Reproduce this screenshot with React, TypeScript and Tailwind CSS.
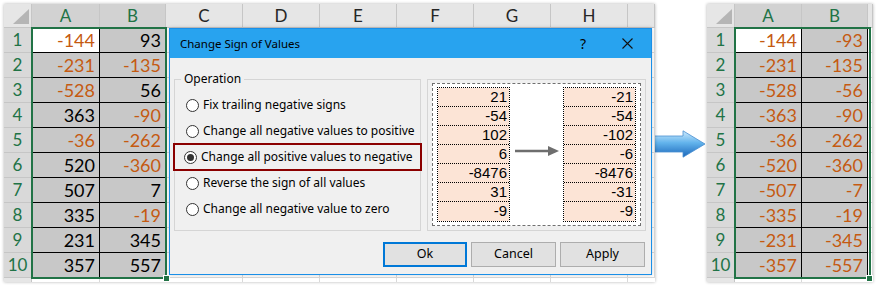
const LEFT: [number, number][] = [
  [-144, 93],
  [-231, -135],
  [-528, 56],
  [363, -90],
  [-36, -262],
  [520, -360],
  [507, 7],
  [335, -19],
  [231, 345],
  [357, 557],
];
const RIGHT = LEFT.map(([a, b]) => [-Math.abs(a), -Math.abs(b)] as [number, number]);

const PREV_L = ['21', '-54', '102', '6', '-8476', '31', '-9'];
const PREV_R = ['-21', '-54', '-102', '-6', '-8476', '-31', '-9'];

const OPTIONS = [
  'Fix trailing negative signs',
  'Change all negative values to positive',
  'Change all positive values to negative',
  'Reverse the sign of all values',
  'Change all negative value to zero',
];

function Corner() {
  return (
    <div className="w-[28px] h-[24px] shrink-0 bg-[#e6e6e6] border-r border-b border-[#c6c6c6] flex items-end justify-end pr-[2px] pb-[3px]">
      <svg width="16" height="15" viewBox="0 0 16 15">
        <polygon points="16,0 16,15 0,15" fill="#b5b5b5" />
      </svg>
    </div>
  );
}

function ColHead({ label, w, sel }: { label: string; w: string; sel?: boolean }) {
  return (
    <div
      className={`${w} h-[24px] shrink-0 border-r border-b border-[#c6c6c6] flex items-center justify-center text-[17px] ${
        sel ? 'bg-[#d2d2d2] text-[#217346]' : 'bg-[#e6e6e6] text-[#262626]'
      }`}
    >
      {label}
    </div>
  );
}

function RowHead({ n }: { n: number | string }) {
  return (
    <div className="w-[28px] h-[25px] shrink-0 bg-[#d9d9d9] border-r border-b border-[#c6c6c6] flex items-center justify-center text-[17px] text-[#217346]">
      {n}
    </div>
  );
}

function Num({ v, w, white }: { v: number; w: string; white?: boolean }) {
  return (
    <div
      className={`${w} h-[25px] shrink-0 border-r border-b border-black flex items-center justify-end pr-[4px] text-[18px] ${
        v < 0 ? 'text-[#c55a11]' : 'text-black'
      } ${white ? 'bg-white' : 'bg-[#c8c8c8]'}`}
    >
      {v}
    </div>
  );
}

function Blank({ w }: { w: string }) {
  return <div className={`${w} h-[25px] shrink-0 border-r border-b border-[#d9d9d9] bg-white`} />;
}

function Radio({ on }: { on?: boolean }) {
  return (
    <span className="w-[13px] h-[13px] shrink-0 rounded-full border border-[#333] bg-white flex items-center justify-center">
      {on && <span className="w-[7px] h-[7px] rounded-full bg-[#333]" />}
    </span>
  );
}

function PrevCol({ items }: { items: string[] }) {
  return (
    <div className="w-[73px] flex flex-col border border-dotted border-black">
      {items.map((t, i) => (
        <div
          key={i}
          className={`h-[19px] bg-[#fce4d6] flex items-center justify-end pr-[2px] text-[15px] text-black font-['Liberation_Sans',sans-serif] ${
            i < items.length - 1 ? 'border-b border-dotted border-black' : ''
          }`}
        >
          {t}
        </div>
      ))}
    </div>
  );
}

function Dialog() {
  return (
    <div className="absolute left-[165px] top-[24px] w-[483px] h-[247px] border border-[#1a8fe8] bg-[#f0f0f0] flex flex-col font-['Noto_Sans',sans-serif] text-[12px] text-black shadow-[0_0_4px_rgba(0,0,0,0.2)]">
      {/* title bar */}
      <div className="h-[29px] bg-[#28a3ef] flex items-center pl-[10px] pr-[18px] text-[11.5px]">
        <span className="flex-1">Change Sign of Values</span>
        <span className="text-[14px] mr-[36px]">?</span>
        <svg width="11" height="11" viewBox="0 0 11 11">
          <path d="M0.5 0.5 L10.5 10.5 M10.5 0.5 L0.5 10.5" stroke="#111" strokeWidth="1.1" />
        </svg>
      </div>

      <div className="flex gap-[6px] pl-[4px] pt-[13px]">
        <fieldset className="w-[247px] h-[160px] border border-[#d5d5d5]">
          <legend className="ml-[6px] px-[3px] leading-[16px] text-[12px]">Operation</legend>
          <div className="flex flex-col pt-[5px]">
            {OPTIONS.map((o, i) =>
              i === 2 ? (
                <div
                  key={i}
                  className="h-[28px] -my-[1px] -mx-[2px] border-2 border-[#8b0000] flex items-center gap-[4px] pl-[9px] whitespace-nowrap"
                >
                  <Radio on />
                  <span>{o}</span>
                </div>
              ) : (
                <div key={i} className="h-[26px] flex items-center gap-[4px] pl-[11px] whitespace-nowrap">
                  <Radio />
                  <span>{o}</span>
                </div>
              )
            )}
          </div>
        </fieldset>

        <div className="mt-[8px] w-[219px] h-[152px] border border-[#d5d5d5] p-[4px] pt-[3px]">
          <div className="h-full border border-dashed border-[#707070] bg-white flex items-start pl-[4px] pt-[3px]">
            <PrevCol items={PREV_L} />
            <div className="w-[53px] flex justify-center pt-[59px]">
              <svg width="44" height="10" viewBox="0 0 44 10">
                <line x1="0" y1="5" x2="34" y2="5" stroke="#6e6e6e" strokeWidth="2.5" />
                <polygon points="33,0 44,5 33,10" fill="#6e6e6e" />
              </svg>
            </div>
            <PrevCol items={PREV_R} />
          </div>
        </div>
      </div>

      <div className="flex justify-end gap-[4px] pr-[6px] mt-[11px]">
        <button className="w-[84px] h-[25px] border-2 border-[#0078d7] bg-[#e1e1e1] text-[12.5px]">Ok</button>
        <button className="w-[85px] h-[25px] border border-[#adadad] bg-[#e1e1e1] text-[12.5px]">Cancel</button>
        <button className="w-[85px] h-[25px] border border-[#adadad] bg-[#e1e1e1] text-[12.5px]">Apply</button>
      </div>
    </div>
  );
}

function LeftSheet() {
  const others = ['w-[77px]', 'w-[77px]', 'w-[77px]', 'w-[77px]', 'w-[77px]', 'w-[77px]'];
  return (
    <div className="relative w-[651px] h-[278px] overflow-hidden bg-white shadow-[0_0_3px_rgba(0,0,0,0.3)]">
      <div className="flex">
        <Corner />
        <ColHead label="A" w="w-[68px]" sel />
        <ColHead label="B" w="w-[66px]" sel />
        {['C', 'D', 'E', 'F', 'G', 'H'].map((c) => (
          <ColHead key={c} label={c} w="w-[77px]" />
        ))}
        <ColHead label="" w="w-[27px]" />
      </div>
      {LEFT.map(([a, b], i) => (
        <div key={i} className="flex">
          <RowHead n={i + 1} />
          <Num v={a} w="w-[68px]" white={i === 0} />
          <Num v={b} w="w-[66px]" />
          {others.map((w, j) => (
            <Blank key={j} w={w} />
          ))}
          <Blank w="w-[27px]" />
        </div>
      ))}
      <div className="flex">
        <div className="w-[28px] h-[25px] shrink-0 bg-[#e6e6e6] border-r border-[#c6c6c6]" />
        <Blank w="w-[68px]" />
        <Blank w="w-[66px]" />
        {others.map((w, j) => (
          <Blank key={j} w={w} />
        ))}
      </div>

      {/* selection outline */}
      <div className="absolute left-[27px] top-[23px] w-[136px] h-[252px] border-2 border-[#217346]" />
      <div className="absolute left-[159px] top-[271px] w-[7px] h-[7px] bg-[#217346] border border-white" />

      <Dialog />
    </div>
  );
}

function RightSheet() {
  return (
    <div className="relative w-[166px] h-[278px] overflow-hidden bg-white shadow-[0_0_3px_rgba(0,0,0,0.3)]">
      <div className="flex">
        <Corner />
        <ColHead label="A" w="w-[67px]" sel />
        <ColHead label="B" w="w-[66px]" sel />
        <ColHead label="" w="w-[5px]" />
      </div>
      {RIGHT.map(([a, b], i) => (
        <div key={i} className="flex">
          <RowHead n={i + 1} />
          <Num v={a} w="w-[67px]" white={i === 0} />
          <Num v={b} w="w-[66px]" />
          <Blank w="w-[5px]" />
        </div>
      ))}
      <div className="flex">
        <div className="w-[28px] h-[25px] shrink-0 bg-[#e6e6e6] border-r border-[#c6c6c6]" />
        <Blank w="w-[67px]" />
        <Blank w="w-[66px]" />
      </div>
      <div className="absolute left-[27px] top-[23px] w-[137px] h-[252px] border-2 border-[#217346]" />
      <div className="absolute left-[159px] top-[271px] w-[7px] h-[7px] bg-[#217346] border border-white" />
    </div>
  );
}

function BlueArrow() {
  return (
    <svg width="54" height="28" viewBox="0 0 54 28" className="-ml-[3px]">
      <defs>
        <linearGradient id="ag" x1="0" y1="0" x2="0" y2="1">
          <stop offset="0" stopColor="#cfeafd" />
          <stop offset="0.45" stopColor="#63b4ec" />
          <stop offset="1" stopColor="#1b67bb" />
        </linearGradient>
      </defs>
      <path
        d="M0.5 6 L31 6 L31 0.8 L53 14 L31 27.2 L31 22 L0.5 22 Z"
        fill="url(#ag)"
        stroke="#4a8fd0"
        strokeWidth="0.8"
      />
    </svg>
  );
}

export default function App() {
  return (
    <div className="w-[879px] h-[285px] bg-white flex items-start pl-[4px] pt-[4px] font-['Lato',sans-serif] overflow-hidden">
      <LeftSheet />
      <div className="w-[52px] mt-[126px] shrink-0">
        <BlueArrow />
      </div>
      <RightSheet />
    </div>
  );
}
